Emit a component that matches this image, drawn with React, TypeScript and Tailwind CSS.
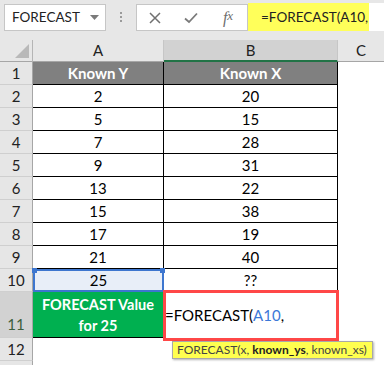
import React from 'react';

const font = { fontFamily: 'Lato, "Open Sans", sans-serif' };

const data = [
  ['2', '20'],
  ['5', '15'],
  ['7', '28'],
  ['9', '31'],
  ['13', '22'],
  ['15', '38'],
  ['17', '19'],
  ['21', '40'],
];

const RowHead = ({ n, h = 'h-[23px]', active = false, bottom = false }: { n: string; h?: string; active?: boolean; bottom?: boolean }) => (
  <div
    className={`w-[33px] shrink-0 ${h} flex justify-center ${bottom ? 'items-end pb-[2px]' : 'items-center'} border-r border-b border-r-[#a6a6a6] border-b-[#cfcfcf] text-[15px] ${
      active ? 'bg-[#d2d2d2] text-[#3b5e3b]' : 'bg-[#e6e6e6] text-[#222]'
    }`}
  >
    {n}
  </div>
);

export default function App() {
  return (
    <div className="w-[384px] h-[365px] overflow-hidden bg-white text-black" style={font}>
      {/* toolbar */}
      <div className="h-[40px] bg-[#e7e7e7] flex items-start pt-[3px] pl-[4px]">
        <div className="w-[102px] h-[27px] mt-[1px] bg-white border border-[#c6c6c6] flex items-center pl-[7px] pr-[6px] text-[13.5px] text-[#222]">
          <span className="flex-1">FORECAST</span>
          <svg width="9" height="6" viewBox="0 0 9 6">
            <path d="M0 0 L9 0 L4.5 5 Z" fill="#7a7a7a" />
          </svg>
        </div>
        <div className="w-[30px] h-[28px] flex flex-col items-center justify-center gap-[2px]">
          <span className="w-[2px] h-[2px] bg-[#9a9a9a]" />
          <span className="w-[2px] h-[2px] bg-[#9a9a9a]" />
          <span className="w-[2px] h-[2px] bg-[#9a9a9a]" />
        </div>
        <div className="w-[112px] h-[27px] mt-[1px] bg-white border border-[#c6c6c6] flex items-center">
          <div className="w-[36px] flex justify-center">
            <svg width="12" height="12" viewBox="0 0 12 12">
              <path d="M1 1 L11 11 M11 1 L1 11" stroke="#707070" strokeWidth="1.5" />
            </svg>
          </div>
          <div className="w-[36px] flex justify-center">
            <svg width="14" height="12" viewBox="0 0 14 12">
              <path d="M1 6.5 L5 10 L13 1.5" stroke="#7a7a7a" strokeWidth="1.8" fill="none" />
            </svg>
          </div>
          <div className="w-[38px] flex justify-center text-[16px] italic text-[#6e6e6e]" style={{ fontFamily: '"Liberation Serif", serif' }}>
            f<span className="text-[13px]">x</span>
          </div>
        </div>
        <div className="flex-1 h-[28px] bg-white flex">
          <div className="w-[121px] h-full bg-[#ffff5a] flex items-center pl-[13px] text-[13.5px] text-[#222] whitespace-nowrap">
            =FORECAST(A10,
          </div>
        </div>
      </div>

      {/* column headers */}
      <div className="flex h-[22px] bg-[#e7e7e7] text-[15px] text-[#222]">
        <div className="w-[33px] shrink-0 border-r border-b border-r-[#b5b5b5] border-b-[#a6a6a6] relative">
          <svg className="absolute right-[3px] bottom-[3px]" width="14" height="14" viewBox="0 0 14 14">
            <path d="M14 0 L14 14 L0 14 Z" fill="#b9b9b9" />
          </svg>
        </div>
        <div className="w-[131px] shrink-0 border-r border-b border-r-[#c6c6c6] border-b-[#a6a6a6] flex items-center justify-center">A</div>
        <div className="w-[174px] shrink-0 bg-[#d2d2d2] border-r border-r-[#c6c6c6] border-b-2 border-b-[#217346] flex items-center justify-center">B</div>
        <div className="flex-1 border-b border-b-[#a6a6a6] flex items-center justify-center">C</div>
      </div>

      {/* row 1 */}
      <div className="flex">
        <RowHead n="1" />
        <div className="w-[131px] h-[23px] shrink-0 bg-[#808080] border-r border-b border-black flex items-center justify-center text-white font-bold text-[15px]">
          Known Y
        </div>
        <div className="w-[174px] h-[23px] shrink-0 bg-[#808080] border-r border-b border-black flex items-center justify-center text-white font-bold text-[15px]">
          Known X
        </div>
      </div>

      {data.map(([y, x], i) => (
        <div key={i} className="flex">
          <RowHead n={String(i + 2)} />
          <div className="w-[131px] h-[23px] shrink-0 border-r border-b border-black flex items-center justify-center text-[15px]">{y}</div>
          <div className="w-[174px] h-[23px] shrink-0 border-r border-b border-black flex items-center justify-center text-[15px]">{x}</div>
        </div>
      ))}

      {/* row 10 */}
      <div className="flex">
        <RowHead n="10" />
        <div className="w-[131px] h-[23px] shrink-0 relative bg-[#e8eef8] border-2 border-[#3d76cf] flex items-center justify-center text-[15px]">
          25
          <span className="absolute -left-[3px] -top-[3px] w-[5px] h-[5px] bg-[#3d76cf]" />
          <span className="absolute -right-[3px] -top-[3px] w-[5px] h-[5px] bg-[#3d76cf]" />
        </div>
        <div className="w-[174px] h-[23px] shrink-0 border-r border-b border-black flex items-center justify-center text-[15px]">??</div>
      </div>

      {/* row 11 */}
      <div className="flex">
        <RowHead n="11" h="h-[46px]" active bottom />
        <div className="w-[131px] h-[46px] shrink-0 bg-[#00b050] border-r border-b border-black flex items-center justify-center text-center text-white font-bold text-[14.5px] leading-[21px]">
          FORECAST Value
          <br />
          for 25
        </div>
        <div className="w-[174px] h-[46px] shrink-0 relative flex items-center pl-[1px] text-[15px]">
          <span className="whitespace-nowrap">
            =FORECAST(<span className="text-[#3c78d8]">A10</span>,
          </span>
          <div className="absolute -left-[1px] -top-[2px] -right-[1px] -bottom-[3px] border-[3px] border-[#ff4747]" />
          <div className="absolute left-[8px] top-[49px] w-[201px] h-[18px] bg-[#ffff4f] border border-[#a8a8a8] shadow-[1px_1px_2px_rgba(0,0,0,0.3)] flex items-center pl-[4px] text-[12px] text-[#444] whitespace-nowrap z-10">
            FORECAST(x,&nbsp;<b className="text-[#222]">known_ys</b>, known_xs)
          </div>
        </div>
      </div>

      {/* row 12 and the top of row 13 */}
      <div className="flex">
        <RowHead n="12" />
      </div>
      <div className="flex">
        <RowHead n="" />
      </div>
    </div>
  );
}
